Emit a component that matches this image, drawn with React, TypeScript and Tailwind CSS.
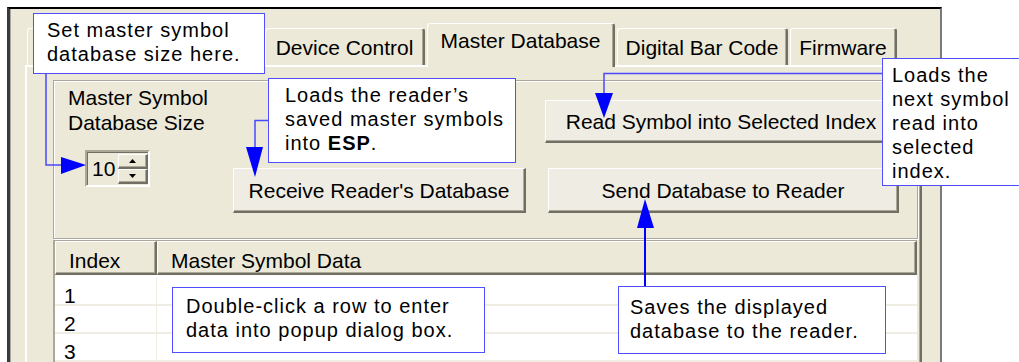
import type { ReactNode } from "react";

const font = "font-['Liberation_Sans',Arial,sans-serif]";

const raised =
  "bg-[#ECE9D8] border-t border-l border-white border-r-2 border-b-2 border-r-[#716F64] border-b-[#716F64] shadow-[inset_-1px_-1px_0_#ACA899]";

function Tab({
  label,
  className,
  selected,
}: {
  label?: string;
  className: string;
  selected?: boolean;
}) {
  return (
    <div
      className={
        selected
          ? `relative z-10 -mb-[2px] h-[44px] rounded-t-[3px] border-t border-l border-white border-r-2 border-r-[#716F64] bg-[#ECE9D8] pt-[4px] text-center shadow-[inset_-1px_0_0_#ACA899] ${className}`
          : `h-[37px] rounded-t-[3px] border-t border-l border-white border-r-2 border-r-[#716F64] bg-[#ECE9D8] pt-[6px] text-center shadow-[inset_-1px_0_0_#ACA899] ${className}`
      }
    >
      {label}
    </div>
  );
}

function Button({ children, className }: { children: ReactNode; className: string }) {
  return (
    <div
      className={`flex items-center justify-center bg-[#EFEDE3] border-t border-l border-white border-r-2 border-b-2 border-r-[#716F64] border-b-[#716F64] shadow-[inset_-1px_-1px_0_#ACA899] ${className}`}
    >
      {children}
    </div>
  );
}

function Callout({ children, className }: { children: ReactNode; className: string }) {
  return (
    <div
      className={`absolute border border-[#4f4fff] bg-white ${font} text-[20px] leading-[24px] tracking-[1px] text-black ${className}`}
    >
      {children}
    </div>
  );
}

function Spin() {
  return (
    <div className="ml-[17px] mt-[15px] flex h-[37px] w-[65px] border-t-2 border-l-2 border-t-[#ACA899] border-l-[#ACA899] border-b-2 border-r-2 border-b-white border-r-white">
      <div className="flex flex-1 border-t border-l border-[#716F64] bg-[#ECE9D8]">
        <div className="w-[30px] pl-[4px] pt-[3px] leading-[25px]">10</div>
        <div className="flex w-[30px] flex-col pt-[1px]">
          <div className={`flex h-[15px] items-center justify-center ${raised}`}>
            <svg width="7" height="4" viewBox="0 0 7 4">
              <polygon points="3.5,0 7,4 0,4" fill="#000" />
            </svg>
          </div>
          <div className={`flex h-[15px] items-center justify-center ${raised}`}>
            <svg width="7" height="4" viewBox="0 0 7 4">
              <polygon points="0,0 7,0 3.5,4" fill="#000" />
            </svg>
          </div>
        </div>
      </div>
    </div>
  );
}

export default function App() {
  const rows = ["1", "2", "3"];
  return (
    <div className={`relative h-[362px] w-[1019px] overflow-hidden bg-white pl-[7px] pt-[7px] ${font} text-[21px] leading-[25px] text-black`}>
      {/* window */}
      <div className="h-[355px] w-[935px] border-t-2 border-l-[3px] border-r-2 border-t-black border-l-[#3a3a3a] border-r-[#7a7a7a] bg-[#ECE9D8] shadow-[inset_1px_0_0_#a8a8a8]">
        {/* tab strip */}
        <div className="flex h-[56px] items-end gap-[2px] pl-[17px]">
          <Tab className="w-[236px]" />
          <Tab label="Device Control" className="w-[160px]" />
          <Tab label="Master Database" className="w-[188px]" selected />
          <Tab label="Digital Bar Code" className="w-[171px]" />
          <Tab label="Firmware" className="w-[107px]" />
        </div>

        {/* tab page */}
        <div className="ml-[15px] h-[297px] w-[897px] border-t-2 border-l-2 border-r-2 border-t-white border-l-white border-r-[#716F64] shadow-[inset_-1px_0_0_#ACA899]">
          {/* settings frame */}
          <div className="ml-[26px] mt-[13px] flex h-[159px] w-[865px] border border-[#ACA899] pl-[14px] pt-[4px] shadow-[inset_1px_1px_0_#fff,1px_1px_0_#fff]">
            <div className="flex w-[165px] flex-col">
              <div>
                Master Symbol
                <br />
                Database Size
              </div>
              <Spin />
            </div>
            <div className="flex flex-col">
              <div className="mt-[15px] flex">
                <Button className="ml-[312px] h-[43px] w-[353px]">Read Symbol into Selected Index</Button>
              </div>
              <div className="mt-[25px] flex gap-[22px]">
                <Button className="h-[45px] w-[293px]">Receive Reader's Database</Button>
                <Button className="h-[45px] w-[351px]">Send Database to Reader</Button>
              </div>
            </div>
          </div>

          {/* list view */}
          <div className="ml-[26px] mt-[1px] w-[864px] border-l-2 border-t border-l-[#ACA899] border-t-[#ACA899] bg-white">
            <div className="flex h-[34px]">
              <div className={`w-[102px] pl-[13px] pt-[6px] ${raised}`}>Index</div>
              <div className={`flex-1 pl-[13px] pt-[6px] ${raised}`}>Master Symbol Data</div>
            </div>
            <div className="pt-[3px]">
              {rows.map((r) => (
                <div key={r} className="flex h-[28px] border-b-2 border-[#EFEDE4]">
                  <div className="w-[102px] border-r border-[#EFEDE4] pl-[9px] pt-[5px]">{r}</div>
                  <div className="flex-1" />
                </div>
              ))}
            </div>
          </div>
        </div>
      </div>

      {/* callouts */}
      <Callout className="left-[33px] top-[13px] h-[61px] w-[232px] pl-[13px] pt-[4px]">
        Set master symbol
        <br />
        database size here.
      </Callout>
      <Callout className="left-[268px] top-[78px] h-[85px] w-[248px] pl-[16px] pt-[4px]">
        Loads the reader’s
        <br />
        saved master symbols
        <br />
        into <b>ESP</b>.
      </Callout>
      <Callout className="left-[882px] top-[58px] h-[128px] w-[150px] pl-[9px] pt-[4px]">
        Loads the
        <br />
        next symbol
        <br />
        read into
        <br />
        selected
        <br />
        index.
      </Callout>
      <Callout className="left-[618px] top-[286px] h-[68px] w-[268px] pl-[11px] pt-[8px]">
        Saves the displayed
        <br />
        database to the reader.
      </Callout>
      <Callout className="left-[172px] top-[287px] h-[66px] w-[313px] pl-[13px] pt-[6px]">
        Double-click a row to enter
        <br />
        data into popup dialog box.
      </Callout>

      {/* leader lines and arrowheads */}
      <svg className="pointer-events-none absolute left-0 top-0" width="1019" height="362" viewBox="0 0 1019 362">
        <polyline points="46,74 46,165 62,165" fill="none" stroke="#4a4aff" strokeWidth="1.5" />
        <polygon points="61,157 86,165 61,174" fill="#0000ff" />
        <polyline points="268,120.5 255,120.5 255,150" fill="none" stroke="#4a4aff" strokeWidth="1.5" />
        <polygon points="246,147 263,147 255,177" fill="#0000ff" />
        <polyline points="882,73.5 604,73.5 604,95" fill="none" stroke="#4a4aff" strokeWidth="1.5" />
        <polygon points="595,93 613,93 604,118" fill="#0000ff" />
        <line x1="645" y1="286" x2="645" y2="226" stroke="#0000ff" strokeWidth="2" />
        <polygon points="637,228 654,228 645,199" fill="#0000ff" />
      </svg>
    </div>
  );
}
